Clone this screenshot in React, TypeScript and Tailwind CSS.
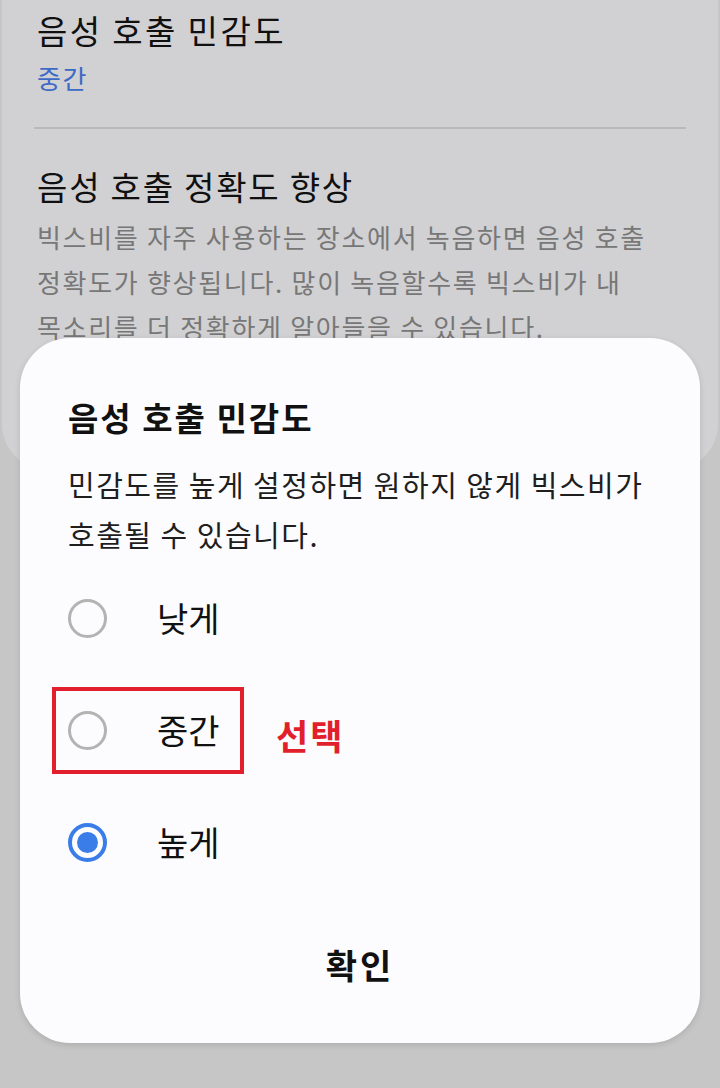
import { useState } from "react";

const FONT = { fontFamily: '"Noto Sans CJK KR", "Noto Sans", sans-serif' };

const options = ["낮게", "중간", "높게"];

function Radio({ checked }: { checked: boolean }) {
  return checked ? (
    <span className="flex h-[39px] w-[39px] items-center justify-center rounded-full border-[4px] border-[#3a7de8]">
      <span className="h-[21px] w-[21px] rounded-full bg-[#3a7de8]" />
    </span>
  ) : (
    <span className="h-[39px] w-[39px] rounded-full border-[3px] border-[#b3b3b3]" />
  );
}

export default function App() {
  const [value, setValue] = useState("높게");

  return (
    <div style={FONT} className="relative h-[1088px] w-[720px] overflow-hidden bg-[#c6c6c6]">
      {/* settings list behind the dim */}
      <div className="mx-[2px] h-[470px] rounded-b-[46px] bg-[#d1d1d3] px-[35px]">
        <div className="pt-[8px] text-[33px] leading-[44px] tracking-[2.4px] text-[#101010]">음성 호출 민감도</div>
        <div className="mt-[6px] text-[26px] leading-[40px] tracking-[1.5px] text-[#3d6ac6]">중간</div>
        <div className="-mx-[3px] mt-[29px] h-[2px] bg-[#b9b9bb]" />
        <div className="mt-[35px] text-[33px] leading-[44px] tracking-[1.8px] text-[#101010]">음성 호출 정확도 향상</div>
        <div className="mt-[6px] text-[26px] leading-[45px] tracking-[1.7px] text-[#777777]">
          빅스비를 자주 사용하는 장소에서 녹음하면 음성 호출
          <br />
          정확도가 향상됩니다. 많이 녹음할수록 빅스비가 내
          <br />
          목소리를 더 정확하게 알아들을 수 있습니다.
        </div>
      </div>

      {/* sensitivity dialog */}
      <div className="absolute left-[20px] top-[338px] flex h-[705px] w-[680px] flex-col rounded-[50px] bg-[#fcfcfe] px-[48px] shadow-[0_2px_6px_rgba(0,0,0,0.12)]">
        <div className="pt-[57px] text-[33px] font-bold leading-[44px] tracking-[2px] text-[#111]">음성 호출 민감도</div>
        <div className="mt-[20px] text-[29px] leading-[50px] tracking-[1.5px] text-[#1e1e1e]">
          민감도를 높게 설정하면 원하지 않게 빅스비가
          <br />
          호출될 수 있습니다.
        </div>
        <div className="mt-[3px] flex flex-col">
          {options.map((opt) => (
            <button
              key={opt}
              onClick={() => setValue(opt)}
              className="flex h-[112px] items-center gap-[50px] text-left"
            >
              <Radio checked={value === opt} />
              <span className="text-[34px] leading-[40px] text-[#111]">{opt}</span>
            </button>
          ))}
        </div>
        <button className="mt-[45px] self-center text-[34px] font-bold leading-[44px] tracking-[3px] text-[#111]">
          확인
        </button>
      </div>

      {/* highlight around the middle option */}
      <div className="pointer-events-none absolute left-[52px] top-[687px] h-[87px] w-[192px] border-[4px] border-[#e21f2c]" />
      <div className="pointer-events-none absolute left-[276px] top-[713px] text-[35px] font-bold leading-[44px] tracking-[2px] text-[#e21f2c]">
        선택
      </div>
    </div>
  );
}
